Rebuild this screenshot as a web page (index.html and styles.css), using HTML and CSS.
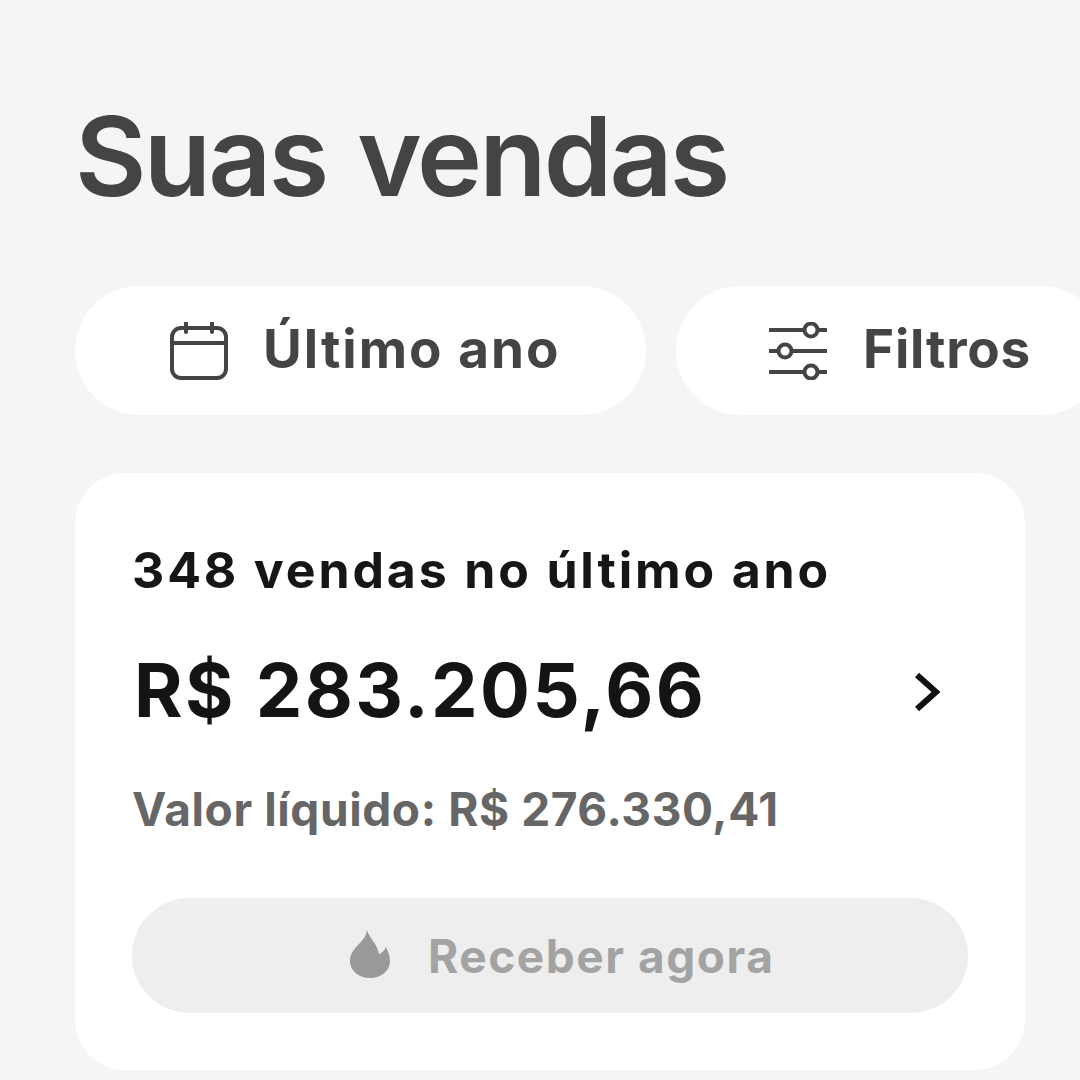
FILE: index.html
```html
<!DOCTYPE html>
<html lang="pt-BR">
<head>
<meta charset="utf-8">
<title>Suas vendas</title>
<link rel="stylesheet" href="styles.css">
</head>
<body>
<main class="page">
  <h1 class="title">Suas vendas</h1>
  <div class="pills">
    <button class="pill pill-date">
      <svg class="icon-cal" viewBox="0 0 58 58" fill="none" stroke="#444" stroke-width="4" stroke-linecap="round">
        <rect x="2" y="6" width="54" height="50" rx="9"/>
        <path d="M2 21H56M16 1V10M42 1V10"/>
      </svg>
      <span class="pill-label">Último ano</span>
    </button>
    <button class="pill pill-filter">
      <svg class="icon-fil" viewBox="0 0 58 58" fill="none" stroke="#444" stroke-width="4" stroke-linecap="round">
        <path d="M1 8H35M49 8H57M1 29H9M23 29H57M1 50H35M49 50H57"/>
        <circle cx="42" cy="8" r="6.5"/>
        <circle cx="16" cy="29" r="6.5"/>
        <circle cx="42" cy="50" r="6.5"/>
      </svg>
      <span class="pill-label">Filtros</span>
    </button>
  </div>
  <section class="card">
    <p class="count">348 vendas no último ano</p>
    <div class="total-row">
      <p class="total">R$ 283.205,66</p>
      <svg class="chev" viewBox="0 0 28 40" fill="none" stroke="#111" stroke-width="6" stroke-linecap="butt">
        <path d="M3 3L22 20L3 37"/>
      </svg>
    </div>
    <p class="net">Valor líquido: R$ 276.330,41</p>
    <button class="cta">
      <svg class="flame" viewBox="0 0 40 48" fill="#999">
        <path d="M17 0C19 8 27 13 29 24C32 23 35 20 36 17C38 21 40 26 40 31C40 41 31 48 20 48C9 48 0 41 0 31C0 24 4 19 8 15C12 11 16 7 17 0Z"/>
      </svg>
      <span>Receber agora</span>
    </button>
  </section>
</main>
</body>
</html>
```
FILE: styles.css
```css
* { box-sizing: border-box; }
html, body { margin: 0; height: 100%; }
body {
  width: 1080px;
  height: 1080px;
  overflow: hidden;
  background: #f5f5f5;
  font-family: "Inter", "Noto Sans", sans-serif;
}
.page { padding: 88px 0 0 75px; }
.title {
  margin: 0;
  font-size: 110px;
  line-height: 136px;
  font-weight: 600;
  color: #444;
  letter-spacing: -2.8px;
  word-spacing: 6px;
}
.pills {
  display: flex;
  gap: 30px;
  margin-top: 62px;
  width: 1005px;
  overflow: hidden;
}
.pill {
  display: flex;
  flex: none;
  align-items: center;
  justify-content: flex-start;
  height: 129px;
  border: 0;
  border-radius: 65px;
  background: #fff;
  color: #444;
  font: 700 53px "Inter", "Noto Sans", sans-serif;
}
.pill-label { margin-bottom: 4px; }
.pill-date { width: 571px; gap: 35px; padding-left: 95px; letter-spacing: 2px; }
.pill-filter { width: 430px; gap: 36px; padding-left: 93px; letter-spacing: 0.8px; }
.icon-cal { width: 58px; height: 58px; }
.icon-fil { width: 58px; height: 58px; }
.card {
  width: 950px;
  height: 597px;
  margin-top: 58px;
  padding: 68px 57px 0;
  background: #fff;
  border-radius: 50px;
}
.count {
  margin: 0;
  font-size: 50px;
  line-height: 58px;
  font-weight: 700;
  color: #161616;
  letter-spacing: 2.85px;
}
.total-row {
  display: flex;
  align-items: center;
  justify-content: space-between;
  margin-top: 45px;
  padding-right: 26px;
}
.total {
  margin: 0 0 0 2px;
  font-size: 74px;
  line-height: 92px;
  font-weight: 700;
  color: #141414;
  letter-spacing: 2.4px;
}
.chev { width: 28px; height: 40px; margin-top: 4px; }
.net {
  margin: 45px 0 0;
  font-size: 46px;
  line-height: 56px;
  font-weight: 700;
  color: #666;
  letter-spacing: 0.6px;
}
.cta {
  display: flex;
  align-items: center;
  justify-content: flex-start;
  gap: 38px;
  width: 836px;
  height: 115px;
  margin-top: 61px;
  padding-left: 218px;
  border: 0;
  border-radius: 58px;
  background: #eee;
  color: #a3a3a3;
  font: 700 46px "Inter", "Noto Sans", sans-serif;
  letter-spacing: 1.55px;
}
.flame { width: 40px; height: 48px; margin-bottom: 3px; }
```
